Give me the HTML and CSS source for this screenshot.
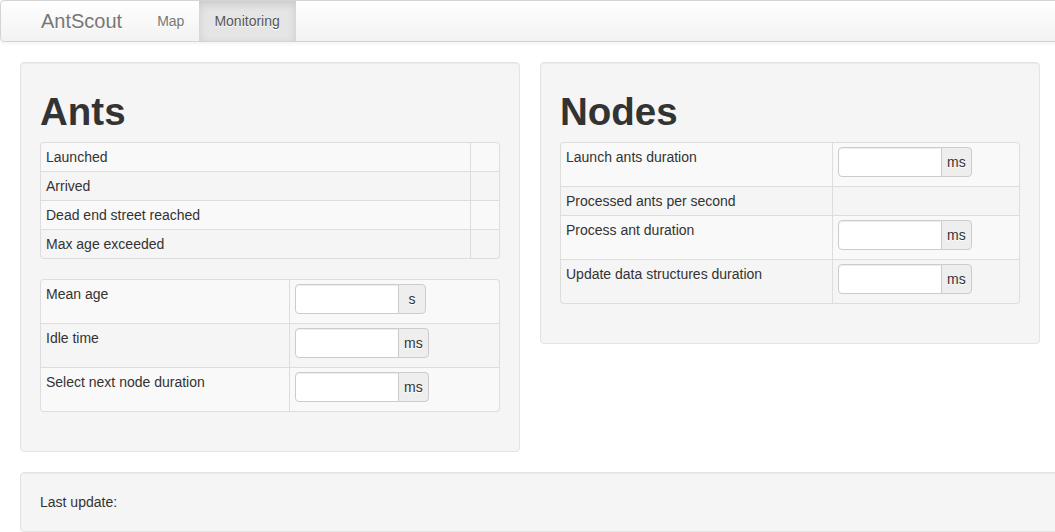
FILE: index.html
```html
<!DOCTYPE html>
<html lang="en">
<head>
<meta charset="utf-8">
<title>AntScout - Monitoring</title>
<link rel="stylesheet" href="styles.css">
</head>
<body>
<div class="page">
  <div class="navbar">
    <a class="brand" href="#">AntScout</a>
    <ul class="nav">
      <li><a href="#">Map</a></li>
      <li class="active"><a href="#">Monitoring</a></li>
    </ul>
  </div>
  <div class="content">
    <div class="row">
      <div class="well panel">
        <h1>Ants</h1>
        <table class="table">
          <tbody>
            <tr><td class="lbl-wide">Launched</td><td></td></tr>
            <tr><td class="lbl-wide">Arrived</td><td></td></tr>
            <tr><td class="lbl-wide">Dead end street reached</td><td></td></tr>
            <tr><td class="lbl-wide">Max age exceeded</td><td></td></tr>
          </tbody>
        </table>
        <table class="table">
          <tbody>
            <tr>
              <td class="lbl-ants">Mean age</td>
              <td><div class="input-append"><input type="text" class="field"><span class="add-on">s</span></div></td>
            </tr>
            <tr>
              <td class="lbl-ants">Idle time</td>
              <td><div class="input-append"><input type="text" class="field"><span class="add-on">ms</span></div></td>
            </tr>
            <tr>
              <td class="lbl-ants">Select next node duration</td>
              <td><div class="input-append"><input type="text" class="field"><span class="add-on">ms</span></div></td>
            </tr>
          </tbody>
        </table>
      </div>
      <div class="well panel">
        <h1>Nodes</h1>
        <table class="table">
          <tbody>
            <tr>
              <td class="lbl-nodes">Launch ants duration</td>
              <td><div class="input-append"><input type="text" class="field"><span class="add-on">ms</span></div></td>
            </tr>
            <tr>
              <td class="lbl-nodes">Processed ants per second</td>
              <td></td>
            </tr>
            <tr>
              <td class="lbl-nodes">Process ant duration</td>
              <td><div class="input-append"><input type="text" class="field"><span class="add-on">ms</span></div></td>
            </tr>
            <tr>
              <td class="lbl-nodes">Update data structures duration</td>
              <td><div class="input-append"><input type="text" class="field"><span class="add-on">ms</span></div></td>
            </tr>
          </tbody>
        </table>
      </div>
    </div>
    <div class="well footer">Last update: </div>
  </div>
</div>
</body>
</html>
```

FILE: styles.css
```css
html, body {
  overflow: hidden;
}

body {
  margin: 0;
  background: #ffffff;
  color: #333333;
  font-family: "Liberation Sans", Helvetica, Arial, sans-serif;
  font-size: 14px;
  line-height: 20px;
}

.page {
  width: 1200px;
}

/* Navbar */
.navbar {
  display: flex;
  align-items: stretch;
  height: 40px;
  padding-left: 20px;
  margin-bottom: 20px;
  background-image: linear-gradient(to bottom, #ffffff, #f2f2f2);
  border: 1px solid #d4d4d4;
  border-radius: 4px;
  box-shadow: 0 1px 4px rgba(0, 0, 0, 0.065);
}

.brand {
  display: block;
  padding: 10px 20px;
  font-size: 20px;
  line-height: 20px;
  font-weight: 200;
  color: #777777;
  text-decoration: none;
  text-shadow: 0 1px 0 #ffffff;
}

.nav {
  display: flex;
  list-style: none;
  margin: 0;
  padding: 0;
}

.nav li a {
  display: block;
  padding: 10px 15px;
  color: #777777;
  text-decoration: none;
  text-shadow: 0 1px 0 #ffffff;
}

.nav li.active a {
  padding: 10px 16px 10px 15px;
  color: #555555;
  background-color: #e5e5e5;
  box-shadow: inset 0 3px 8px rgba(0, 0, 0, 0.125);
}

/* Content */
.content {
  padding-left: 20px;
}

.row {
  display: flex;
  align-items: flex-start;
  gap: 20px;
}

.well {
  box-sizing: border-box;
  min-height: 20px;
  padding: 19px;
  margin-bottom: 20px;
  background-color: #f5f5f5;
  border: 1px solid #e3e3e3;
  border-radius: 4px;
  box-shadow: inset 0 1px 1px rgba(0, 0, 0, 0.05);
}

.panel {
  width: 500px;
}

.footer {
  width: 1170px;
  margin-bottom: 0;
}

h1 {
  margin: 10px 0;
  font-size: 38.5px;
  line-height: 40px;
  font-weight: bold;
  color: #333333;
}

/* Tables */
.table {
  width: 100%;
  margin-bottom: 20px;
  border-collapse: separate;
  border-spacing: 0;
  border: 1px solid #dddddd;
  border-left: 0;
  border-radius: 4px;
}

.table td {
  padding: 4px 5px;
  line-height: 20px;
  text-align: left;
  vertical-align: top;
  border-top: 1px solid #dddddd;
  border-left: 1px solid #dddddd;
}

.table tr:first-child td {
  border-top: 0;
}

.table tr:nth-child(odd) td {
  background-color: #f9f9f9;
}

.table tr:first-child td:first-child {
  border-top-left-radius: 4px;
}

.table tr:first-child td:last-child {
  border-top-right-radius: 4px;
}

.table tr:last-child td:first-child {
  border-bottom-left-radius: 4px;
}

.table tr:last-child td:last-child {
  border-bottom-right-radius: 4px;
}

.lbl-wide {
  width: 419px;
}

.lbl-ants {
  width: 238px;
}

.lbl-nodes {
  width: 261px;
}

/* Input groups */
.input-append {
  display: inline-block;
  margin-bottom: 5px;
  font-size: 0;
  white-space: nowrap;
  vertical-align: middle;
}

.field {
  box-sizing: border-box;
  width: 104px;
  height: 30px;
  margin: 0;
  padding: 4px 6px;
  font-family: inherit;
  font-size: 14px;
  line-height: 20px;
  color: #555555;
  background-color: #ffffff;
  border: 1px solid #cccccc;
  border-radius: 4px 0 0 4px;
  box-shadow: inset 0 1px 1px rgba(0, 0, 0, 0.075);
  vertical-align: top;
  outline: none;
}

.add-on {
  box-sizing: border-box;
  display: inline-block;
  height: 30px;
  min-width: 28px;
  margin-left: -1px;
  padding: 4px 5px;
  font-size: 14px;
  line-height: 20px;
  text-align: center;
  color: #333333;
  background-color: #eeeeee;
  border: 1px solid #cccccc;
  border-radius: 0 4px 4px 0;
  text-shadow: 0 1px 0 #ffffff;
  vertical-align: top;
}
```
